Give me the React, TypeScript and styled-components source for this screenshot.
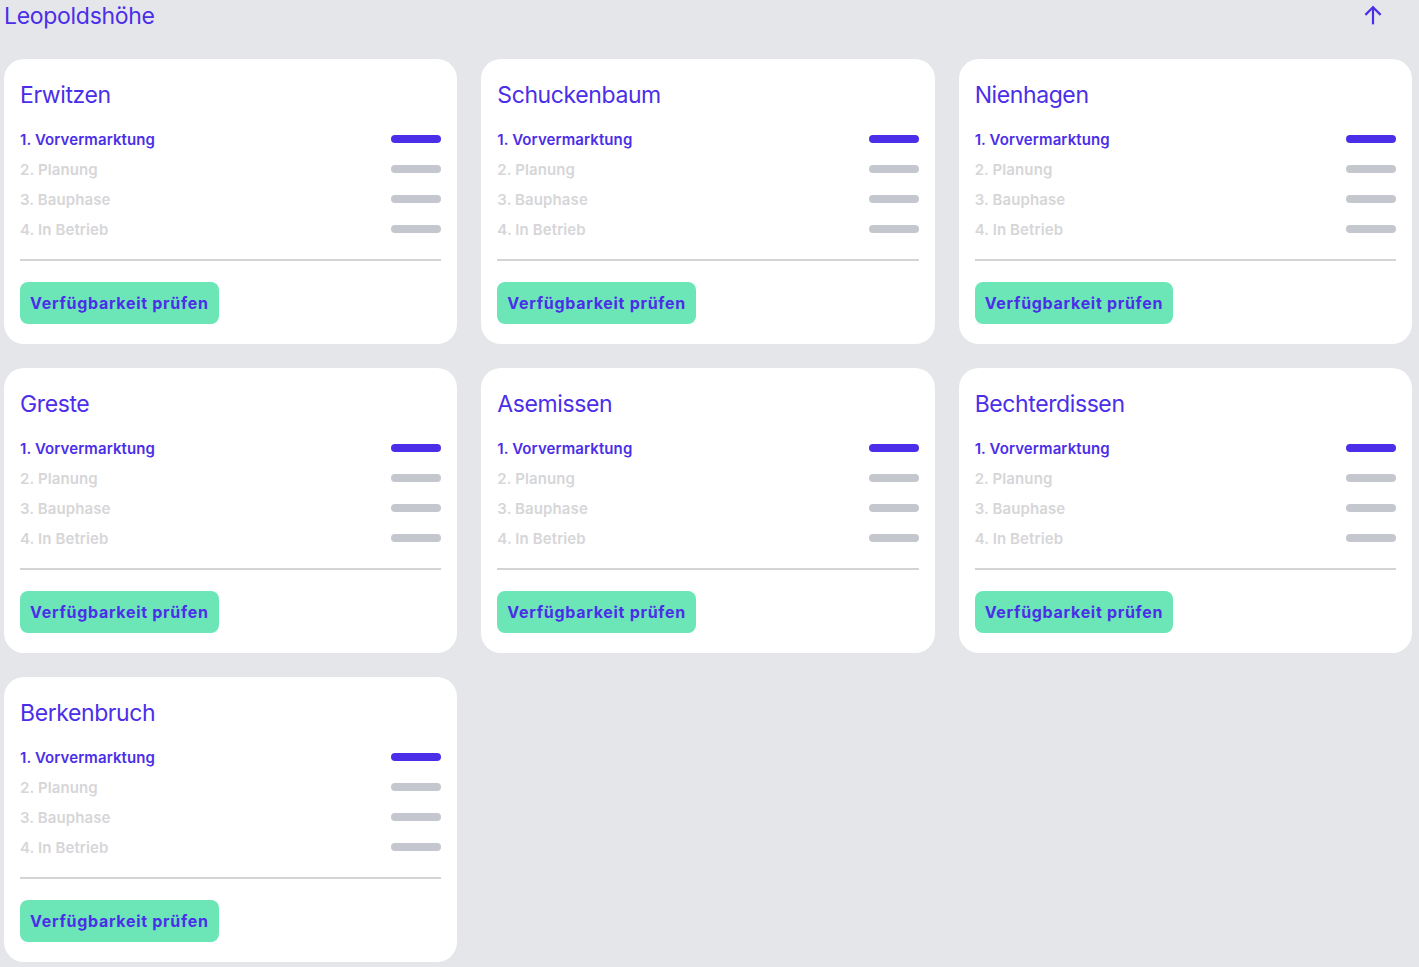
import styled, { createGlobalStyle } from 'styled-components'

type iPhase = {
  label: string
}

type iLocation = {
  name: string
  activePhase: number
}

const phases: iPhase[] = [
  { label: '1. Vorvermarktung' },
  { label: '2. Planung' },
  { label: '3. Bauphase' },
  { label: '4. In Betrieb' }
]

const locations: iLocation[] = [
  { name: 'Erwitzen', activePhase: 0 },
  { name: 'Schuckenbaum', activePhase: 0 },
  { name: 'Nienhagen', activePhase: 0 },
  { name: 'Greste', activePhase: 0 },
  { name: 'Asemissen', activePhase: 0 },
  { name: 'Bechterdissen', activePhase: 0 },
  { name: 'Berkenbruch', activePhase: 0 }
]

const GlobalStyle = createGlobalStyle`
  html, body {
    margin: 0;
    padding: 0;
    background: #e5e6ea;
    font-family: Inter, "Noto Sans", sans-serif;
  }
`

const ArrowUpIcon = () => (
  <svg width="22" height="22" viewBox="0 0 24 24" fill="none" stroke="currentColor" strokeWidth="2.4" strokeLinecap="square">
    <path d="M12 21V4" />
    <path d="M4.5 11L12 3.5L19.5 11" />
  </svg>
)

const LocationCard = ({ location }: { location: iLocation }) => (
  <Card>
    <CardTitle>{location.name}</CardTitle>
    <PhaseList>
      {phases.map((phase, i) => (
        <PhaseRow key={phase.label}>
          <PhaseLabel $active={i === location.activePhase}>{phase.label}</PhaseLabel>
          <PhaseBar $active={i === location.activePhase} />
        </PhaseRow>
      ))}
    </PhaseList>
    <Divider />
    <CheckButton type="button">Verfügbarkeit prüfen</CheckButton>
  </Card>
)

const App = () => (
  <>
    <GlobalStyle />
    <Page>
      <Header>
        <RegionTitle>Leopoldshöhe</RegionTitle>
        <ScrollTopButton type="button" aria-label="Nach oben">
          <ArrowUpIcon />
        </ScrollTopButton>
      </Header>
      <Grid>
        {locations.map((location) => (
          <LocationCard key={location.name} location={location} />
        ))}
      </Grid>
    </Page>
  </>
)

export default App

const purple = '#4b2ee8'

const Page = styled.div({
  padding: '0 7px 6px 4px'
})
const Header = styled.div({
  height: 35,
  display: 'flex',
  alignItems: 'center',
  justifyContent: 'space-between',
  marginBottom: 24
})
const RegionTitle = styled.h1({
  margin: 0,
  marginTop: -4,
  fontSize: 23,
  fontWeight: 400,
  letterSpacing: -0.3,
  color: purple
})
const ScrollTopButton = styled.button({
  background: 'none',
  border: 'none',
  padding: 0,
  marginRight: 28,
  marginTop: -6,
  color: purple,
  display: 'flex',
  cursor: 'pointer'
})
const Grid = styled.div({
  display: 'grid',
  gridTemplateColumns: 'repeat(3, 1fr)',
  gap: 24
})
const Card = styled.div({
  background: '#fff',
  borderRadius: 20,
  padding: '20px 16px 20px',
  display: 'flex',
  flexDirection: 'column'
})
const CardTitle = styled.h2({
  margin: 0,
  fontSize: 23,
  lineHeight: '32px',
  fontWeight: 400,
  letterSpacing: -0.4,
  color: purple
})
const PhaseList = styled.div({
  marginTop: 13,
  display: 'flex',
  flexDirection: 'column'
})
const PhaseRow = styled.div({
  height: 30,
  display: 'flex',
  alignItems: 'center',
  justifyContent: 'space-between'
})
const PhaseLabel = styled.span<{ $active: boolean }>`
  font-size: 15px;
  font-weight: 600;
  letter-spacing: 0.1px;
  color: ${(p) => (p.$active ? purple : '#d6d6d8')};
`
const PhaseBar = styled.span<{ $active: boolean }>`
  width: 50px;
  height: 8px;
  border-radius: 4px;
  background: ${(p) => (p.$active ? purple : '#c5c7ce')};
`
const Divider = styled.hr({
  margin: '15px 0 21px',
  border: 'none',
  borderTop: '2px solid #d4d4d6',
  height: 0
})
const CheckButton = styled.button({
  alignSelf: 'flex-start',
  height: 42,
  padding: '0 10px',
  border: 'none',
  borderRadius: 8,
  background: '#6de6b7',
  color: purple,
  fontFamily: 'Inter, "Noto Sans", sans-serif',
  fontSize: 16,
  fontWeight: 700,
  letterSpacing: 0.7,
  cursor: 'pointer'
})
